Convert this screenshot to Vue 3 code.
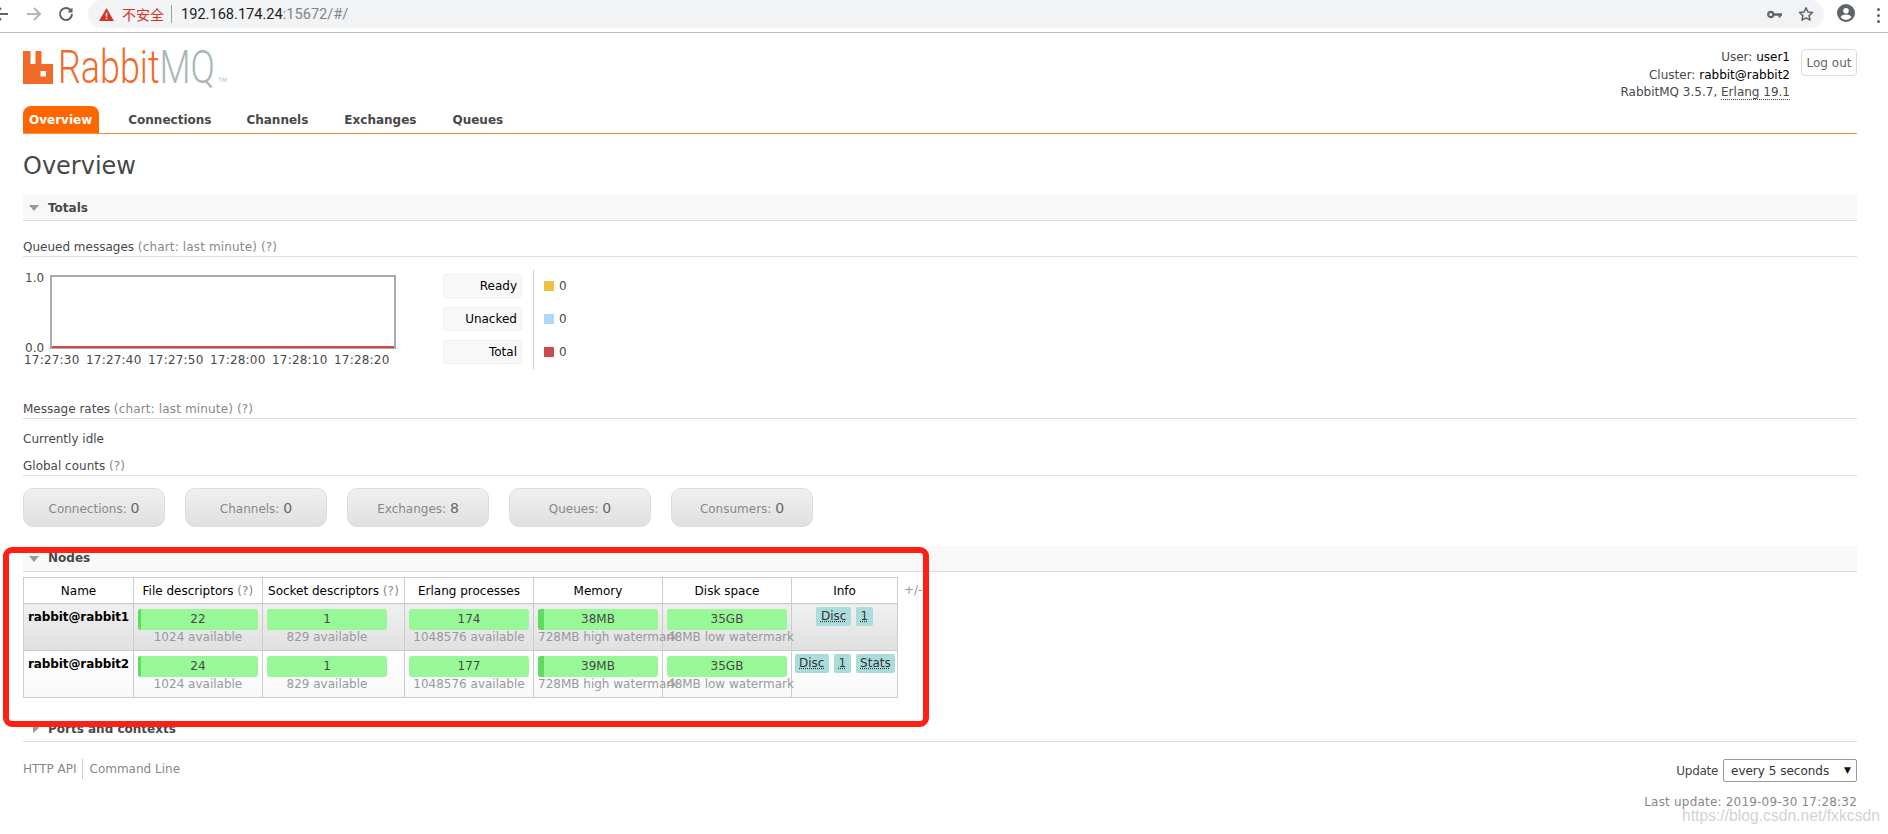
<script setup>
const tabs = ['Overview', 'Connections', 'Channels', 'Exchanges', 'Queues']
const times = ['17:27:30', '17:27:40', '17:27:50', '17:28:00', '17:28:10', '17:28:20']
const legend = [
  { label: 'Ready', color: '#edc240' },
  { label: 'Unacked', color: '#afd8f8' },
  { label: 'Total', color: '#cb4b4b' }
]
const counts = [
  ['Connections', 0], ['Channels', 0], ['Exchanges', 8], ['Queues', 0], ['Consumers', 0]
]
const nodes = [
  { name: 'rabbit@rabbit1', cls: 'alt1', fd: 22, sock: 1, proc: 174, mem: '38MB', memFill: 6, info: ['Disc', '1'] },
  { name: 'rabbit@rabbit2', cls: 'alt2', fd: 24, sock: 1, proc: 177, mem: '39MB', memFill: 6, info: ['Disc', '1', 'Stats'] }
]
</script>

<template>
  <div class="root">
    <div class="chrome">
      <svg class="nav-ic back" viewBox="0 0 16 16"><path d="M15 8H2M8 2L2 8l6 6" /></svg>
      <svg class="nav-ic fwd" viewBox="0 0 16 16"><path d="M1 8h13M8 2l6 6-6 6" /></svg>
      <svg class="nav-ic reload" viewBox="0 0 16 16"><path d="M13.2 5A6 6 0 1 0 14 8" /><path class="fill" d="M14.5 1.500v5h-5z" /></svg>
      <div class="omnibox">
        <svg class="warn" viewBox="0 0 16 14"><path d="M8 0l8 14H0z" fill="#d93025" /><path d="M7.200 5h1.600v4.500H7.200zM7.200 10.500h1.600V12H7.200z" fill="#fff" /></svg>
        <span class="insecure">不安全</span>
        <span class="sep"></span>
        <span class="url">192.168.174.24<span class="url-dim">:15672/#/</span></span>
        <svg class="key" viewBox="0 0 16 9"><circle cx="4" cy="4.500" r="2.800" fill="none" stroke="#5f6368" stroke-width="2.200" /><path d="M6.500 3.200H16v2.600h-1.400v2h-2.400v-2H6.500z" fill="#5f6368" /></svg>
        <svg class="star" viewBox="0 0 16 16"><path d="M8 1.800l1.900 4.200 4.600.5-3.400 3.100.9 4.500L8 11.800l-4 2.300.9-4.500L1.500 6.500 6.100 6z" fill="none" stroke="#5f6368" stroke-width="1.500" stroke-linejoin="round" /></svg>
      </div>
      <svg class="avatar" viewBox="0 0 18 18"><circle cx="9" cy="9" r="9" fill="#5f6368" /><circle cx="9" cy="6.800" r="2.800" fill="#fff" /><path d="M3.500 13c1.300-2 3.500-2.600 5.500-2.600s4.200.6 5.500 2.600A7 7 0 0 1 9 16a7 7 0 0 1-5.500-3z" fill="#fff" /></svg>
      <span class="dots"><i></i><i></i><i></i></span>
    </div>

    <div class="page">
      <header class="header">
        <div class="logo">
          <svg class="logo-ic" viewBox="0 0 30 33"><path fill-rule="evenodd" d="M0 0h7.500v13h5V0h6v13H30v20H0zM17.500 20v5.500H23V20z" fill="#f26a27" /></svg>
          <span class="logo-word"><span class="logo-inner"><span class="logo-rabbit">Rabbit</span><span class="logo-mq">MQ</span></span></span><span class="logo-tm">TM</span>
        </div>
        <div class="login">
          <div class="who">
            <div>User: <b>user1</b></div>
            <div>Cluster: <b>rabbit@rabbit2</b></div>
            <div>RabbitMQ 3.5.7, <abbr>Erlang 19.1</abbr></div>
          </div>
          <button class="logout">Log out</button>
        </div>
      </header>

      <nav class="tabs">
        <a v-for="(t, i) in tabs" :key="t" class="tab" :class="{ active: i === 0 }">{{ t }}</a>
      </nav>

      <h1 class="title">Overview</h1>

      <div class="bar totals"><span class="tri down"></span>Totals</div>

      <div class="sub queued">Queued messages <span class="dim">(chart: last minute) (?)</span></div>

      <div class="chart-row">
        <div class="chart">
          <div class="ylabel top">1.0</div>
          <div class="ylabel bottom">0.0</div>
          <div class="plot"><div class="plot-line"></div></div>
          <div class="xlabels"><span v-for="t in times" :key="t">{{ t }}</span></div>
        </div>
        <div class="legend">
          <div class="legend-labels">
            <div v-for="l in legend" :key="l.label" class="legend-label">{{ l.label }}</div>
          </div>
          <div class="legend-values">
            <div v-for="l in legend" :key="l.label" class="legend-value">
              <i class="swatch" :style="{ background: l.color }"></i>0
            </div>
          </div>
        </div>
      </div>

      <div class="sub rates">Message rates <span class="dim">(chart: last minute) (?)</span></div>
      <div class="idle">Currently idle</div>
      <div class="sub global">Global counts <span class="dim">(?)</span></div>

      <div class="counts">
        <div v-for="c in counts" :key="c[0]" class="count">{{ c[0] }}: <span class="num">{{ c[1] }}</span></div>
      </div>

      <div class="bar nodes-bar"><span class="tri down"></span>Nodes</div>

      <div class="nodes-wrap">
        <table class="nodes">
          <colgroup>
            <col class="c1" /><col class="c2" /><col class="c3" />
            <col class="c4" /><col class="c5" /><col class="c6" /><col class="c7" />
          </colgroup>
          <thead>
            <tr>
              <th>Name</th>
              <th>File descriptors <span class="dim">(?)</span></th>
              <th>Socket descriptors <span class="dim">(?)</span></th>
              <th>Erlang processes</th>
              <th>Memory</th>
              <th>Disk space</th>
              <th>Info</th>
            </tr>
          </thead>
          <tbody>
            <tr v-for="n in nodes" :key="n.name" :class="n.cls">
              <td class="name">{{ n.name }}</td>
              <td><div class="meter"><i class="fill" :style="{ width: '3px' }"></i>{{ n.fd }}</div><div class="avail">1024 available</div></td>
              <td><div class="meter">{{ n.sock }}</div><div class="avail">829 available</div></td>
              <td><div class="meter">{{ n.proc }}</div><div class="avail">1048576 available</div></td>
              <td><div class="meter"><i class="fill" :style="{ width: n.memFill + 'px' }"></i>{{ n.mem }}</div><div class="avail">728MB high watermark</div></td>
              <td><div class="meter">35GB</div><div class="avail">48MB low watermark</div></td>
              <td class="info"><abbr v-for="b in n.info" :key="b" class="badge">{{ b }}</abbr></td>
            </tr>
          </tbody>
        </table>
        <span class="plusminus">+/-</span>
      </div>

      <div class="bar ports-bar"><span class="tri right"></span>Ports and contexts</div>

      <footer class="footer">
        <div class="links"><a>HTTP API</a><a>Command Line</a></div>
        <div class="update">
          <div class="update-row">
            <label>Update</label>
            <div class="select">every 5 seconds<span class="caret">▼</span></div>
          </div>
          <div class="last">Last update: 2019-09-30 17:28:32</div>
        </div>
      </footer>
    </div>

    <div class="redbox"></div>
    <div class="watermark">https://blog.csdn.net/fxkcsdn</div>
  </div>
</template>

<style scoped>
.root { position: relative; width: 1888px; height: 834px; overflow: hidden; background: #fff; font: 12px "DejaVu Sans", Verdana, sans-serif; color: #484848; }
.chrome { height: 32px; border-bottom: 1px solid #bbb; display: flex; align-items: flex-start; box-sizing: content-box; position: relative; }
.nav-ic { position: absolute; top: 6px; width: 16px; height: 16px; fill: none; stroke: #5f6368; stroke-width: 2; }
.nav-ic .fill { fill: #5f6368; stroke: none; }
.back { left: -7px; }
.fwd { left: 26px; stroke: #b4b6b9; }
.reload { left: 58px; }
.omnibox { margin-left: 88px; width: 1736px; height: 28px; background: #f1f3f4; border-radius: 0 14px 14px 14px; border-top-left-radius: 14px; display: flex; align-items: center; }
.warn { width: 15px; height: 13px; margin-left: 11px; }
.insecure { margin-left: 8px; font: 14px "Noto Sans CJK SC", sans-serif; color: #d93025; }
.sep { width: 1px; height: 18px; background: #9aa0a6; margin: 0 9px 0 7px; }
.url { font: 14.6px Roboto, sans-serif; color: #202124; }
.url-dim { color: #80868b; }
.key { width: 15px; height: 9px; margin-left: auto; }
.star { width: 16px; height: 16px; margin-left: 16px; margin-right: 10px; }
.avatar { width: 18px; height: 18px; margin: 4px 0 0 13px; }
.dots { display: flex; flex-direction: column; gap: 3px; margin: 8px 0 0 22px; }
.dots i { width: 3px; height: 3px; border-radius: 50%; background: #5f6368; }

.page { padding: 0 31px 0 23px; }
.header { height: 73px; display: flex; justify-content: space-between; }
.logo { display: flex; align-items: flex-end; height: 33px; margin-top: 18px; white-space: nowrap; }
.logo-ic { width: 30px; height: 33px; margin-right: 5px; flex: none; }
.logo-word { display: block; width: 157px; height: 33px; flex: none; }
.logo-inner { display: inline-block; font: 300 46px/33px Roboto, sans-serif; transform: scaleX(0.78); transform-origin: left center; }
.logo-rabbit { color: #f26a27; }
.logo-mq { color: #a8b8b0; }
.logo-tm { font: 6px "DejaVu Sans", sans-serif; color: #b5c0bb; margin: 0 0 1px 3px; }
.login { display: flex; align-items: flex-start; margin-top: 16px; }
.who { text-align: right; line-height: 17.500px; }
.who b { font-weight: normal; color: #000; }
.who abbr { border-bottom: 1px dotted #484848; }
.logout { width: 56px; height: 27px; margin-left: 11px; background: #fff; border: 1px solid #ddd; border-radius: 4px; font: 12px "DejaVu Sans", sans-serif; color: #666; padding: 0; }

.tabs { height: 27px; border-bottom: 1px solid #f29130; display: flex; box-sizing: content-box; }
.tab { padding: 1px 6px 0; margin-right: 24px; line-height: 26px; font-weight: bold; border-radius: 8px 8px 0 0; color: #484848; }
.tab.active { background: #f60; color: #fff; padding-right: 7px; margin-right: 23px; }
.tab:nth-child(2) { margin-right: 23px; }
.title { margin: 19px 0 0; height: 27px; line-height: 27px; font-size: 24px; font-weight: normal; color: #484848; }
.bar { height: 24px; padding-top: 1px; line-height: 24px; border-bottom: 1px solid #ddd; background: #f8f8f8; font-weight: bold; box-sizing: content-box; padding-left: 25px; position: relative; }
.tri { position: absolute; left: 6px; width: 0; height: 0; }
.tri.down { top: 10px; border-left: 5.500px solid transparent; border-right: 5.500px solid transparent; border-top: 6px solid #999; }
.tri.right { top: 7px; left: 10px; border-top: 5.500px solid transparent; border-bottom: 5.500px solid transparent; border-left: 6px solid #999; }
.totals { margin-top: 15px; }
.sub { height: 18px; line-height: 18px; border-bottom: 1px solid #ddd; box-sizing: content-box; }
.dim { color: #888; letter-spacing: 0.15px; }
.queued { margin-top: 17px; }

.chart-row { height: 100px; display: flex; margin-top: 13px; }
.chart { position: relative; width: 420px; flex: none; }
.plot { position: absolute; left: 27px; top: 5px; width: 346px; height: 74px; border: 2px solid #aaa; box-sizing: border-box; }
.plot-line { position: absolute; left: 0; right: 0; bottom: -1px; height: 2px; background: #cb4b4b; }
.ylabel { position: absolute; left: 2px; line-height: 14px; }
.ylabel.top { top: 1px; }
.ylabel.bottom { top: 71px; }
.xlabels { position: absolute; left: 1px; top: 83px; display: flex; gap: 6px; white-space: nowrap; line-height: 14px; letter-spacing: 0.2px; }
.xlabels span { width: 56px; }
.legend { display: flex; height: 99px; }
.legend-labels { width: 79px; margin-top: 4px; display: flex; flex-direction: column; gap: 9px; }
.legend-label { height: 24px; line-height: 23px; text-align: right; padding-right: 4px; background: #f8f8f8; border: 1px solid #f0f0f0; border-radius: 3px; color: #000; box-sizing: border-box; }
.legend-values { margin-left: 11px; border-left: 1px solid #ccc; padding-left: 10px; display: flex; flex-direction: column; gap: 9px; padding-top: 4px; }
.legend-value { height: 24px; line-height: 24px; display: flex; align-items: center; }
.swatch { width: 10px; height: 10px; margin-right: 5px; }
.rates { margin-top: 30px; }
.idle { margin-top: 11px; height: 18px; line-height: 18px; }
.global { margin-top: 9px; }

.counts { display: flex; gap: 20px; margin-top: 12px; }
.count { width: 142px; height: 39px; line-height: 38px; text-align: center; border: 1px solid #ddd; border-radius: 10px; background: linear-gradient(#f0f0f0, #e0e0e0); box-sizing: border-box; color: #888; }
.num { font-size: 14px; color: #666; }
.nodes-bar { margin-top: 19px; padding-top: 0; height: 25px; }
.nodes-wrap { display: flex; margin-top: 5px; height: 121px; }
.nodes { border-collapse: collapse; table-layout: fixed; width: 874px; height: 121px; }
.c1 { width: 110px; } .c2 { width: 129px; } .c3 { width: 142px; } .c4 { width: 129px; }
.c5 { width: 129px; } .c6 { width: 129px; } .c7 { width: 106px; }
.nodes th { height: 25px; font-weight: normal; color: #000; border: 1px solid #ccc; padding: 0; background: #fff; white-space: nowrap; }
.nodes td { border: 1px solid #ccc; padding: 5px 0 0 4px; text-align: center; vertical-align: top; height: 47px; box-sizing: border-box; white-space: nowrap; }
.alt1 td { background: linear-gradient(#f0f0f0, #e0e0e0); }
.alt2 td { background: linear-gradient(#fff, #f8f8f8); }
.nodes td.name { font-weight: bold; color: #000; text-align: left; padding-left: 4px; padding-top: 6px; letter-spacing: -0.1px; }
.meter { position: relative; width: 120px; height: 21px; line-height: 21px; background: #98f898; border-radius: 3px; overflow: hidden; color: #484848; }
.fill { position: absolute; left: 0; top: 0; bottom: 0; background: #5fdb5f; }
.avail { width: 120px; color: #999; line-height: 15px; height: 15px; }
.nodes td.info { padding: 3px 0 0; }
.badge { display: inline-block; height: 19px; line-height: 18px; margin: 0 2.500px; background: #aadcdc; color: #333; border-radius: 2px; text-decoration: underline dotted; padding: 0 4.500px; }
.plusminus { margin: 6px 0 0 6px; color: #999; line-height: 14px; }

.ports-bar { margin-top: 18px; background: #fff; }
.footer { display: flex; justify-content: space-between; margin-top: 17px; }
.links { display: flex; height: 20px; align-items: center; }
.links a { color: #888; }
.links a + a { border-left: 1px solid #ccc; margin-left: 5px; padding-left: 7px; line-height: 20px; }
.update { display: flex; flex-direction: column; align-items: flex-end; }
.update-row { display: flex; align-items: center; gap: 5px; }
.update-row label { letter-spacing: -0.3px; }
.select { width: 134px; height: 23px; line-height: 22px; border: 1px solid #999; border-radius: 2px; box-sizing: border-box; padding-left: 7px; color: #333; position: relative; }
.caret { position: absolute; right: 5px; top: -1px; font-size: 9px; color: #111; }
.last { margin-top: 13px; color: #888; line-height: 14px; letter-spacing: 0.2px; }

.redbox { position: absolute; left: 3px; top: 547px; width: 926px; height: 180px; border: 6px solid #ff2015; border-radius: 9px; box-sizing: border-box; pointer-events: none; }
.watermark { position: absolute; left: 1682px; top: 807px; font: 15.700px "Liberation Sans", sans-serif; color: rgba(170, 170, 170, 0.55); white-space: nowrap; }
</style>
